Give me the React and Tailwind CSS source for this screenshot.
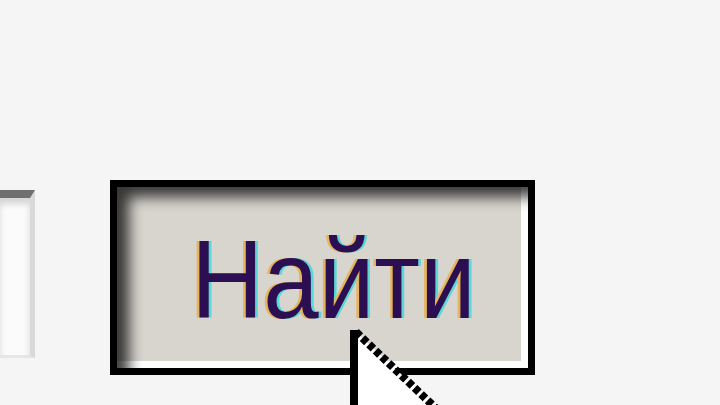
export default function App() {
    return (
        <div className="relative w-[720px] h-[405px] overflow-hidden bg-[#f5f5f5]" style={{ fontFamily: '"Liberation Sans", Arial, sans-serif' }}>
            <div className="flex items-start pt-[180px]">
                {/* search field, cut off at the left edge */}
                <div className="mt-[10px] w-[35px] h-[168px] bg-[#fbfbfb] border-t-[8px] border-t-[#6f6f6f] border-r-[5px] border-r-[#d9d9d9] border-b-[3px] border-b-[#e6e6e6] shadow-[inset_0_6px_6px_rgba(0,0,0,0.15)]" />

                <div className="ml-[75px] w-[425px] h-[195px] border-[7px] border-black bg-[#d8d5cf] shadow-[inset_16px_14px_14px_-4px_rgba(0,0,0,0.75),inset_-7px_-7px_0_#ffffff] flex items-center justify-center">
                    <span className="inline-block scale-x-[0.89] text-[112px] leading-none text-[#2b0f52] pl-[24px] pt-[4px] [text-shadow:-3px_0_0_#e6b45c,3px_0_0_#5cd6d6]">
                        Найти
                    </span>
                </div>
            </div>

            {/* mouse pointer, enlarged */}
            <svg className="absolute left-[350px] top-[326px]" width="120" height="90" viewBox="0 0 120 90">
                <path d="M4 4 L4 90 L96 90 Z" fill="#ffffff" />
                <path d="M4 4 L4 90" stroke="#000" strokeWidth="8" />
                <path d="M6 6 L94 90" stroke="#000" strokeWidth="8" strokeDasharray="6 3" />
            </svg>
        </div>
    );
}
